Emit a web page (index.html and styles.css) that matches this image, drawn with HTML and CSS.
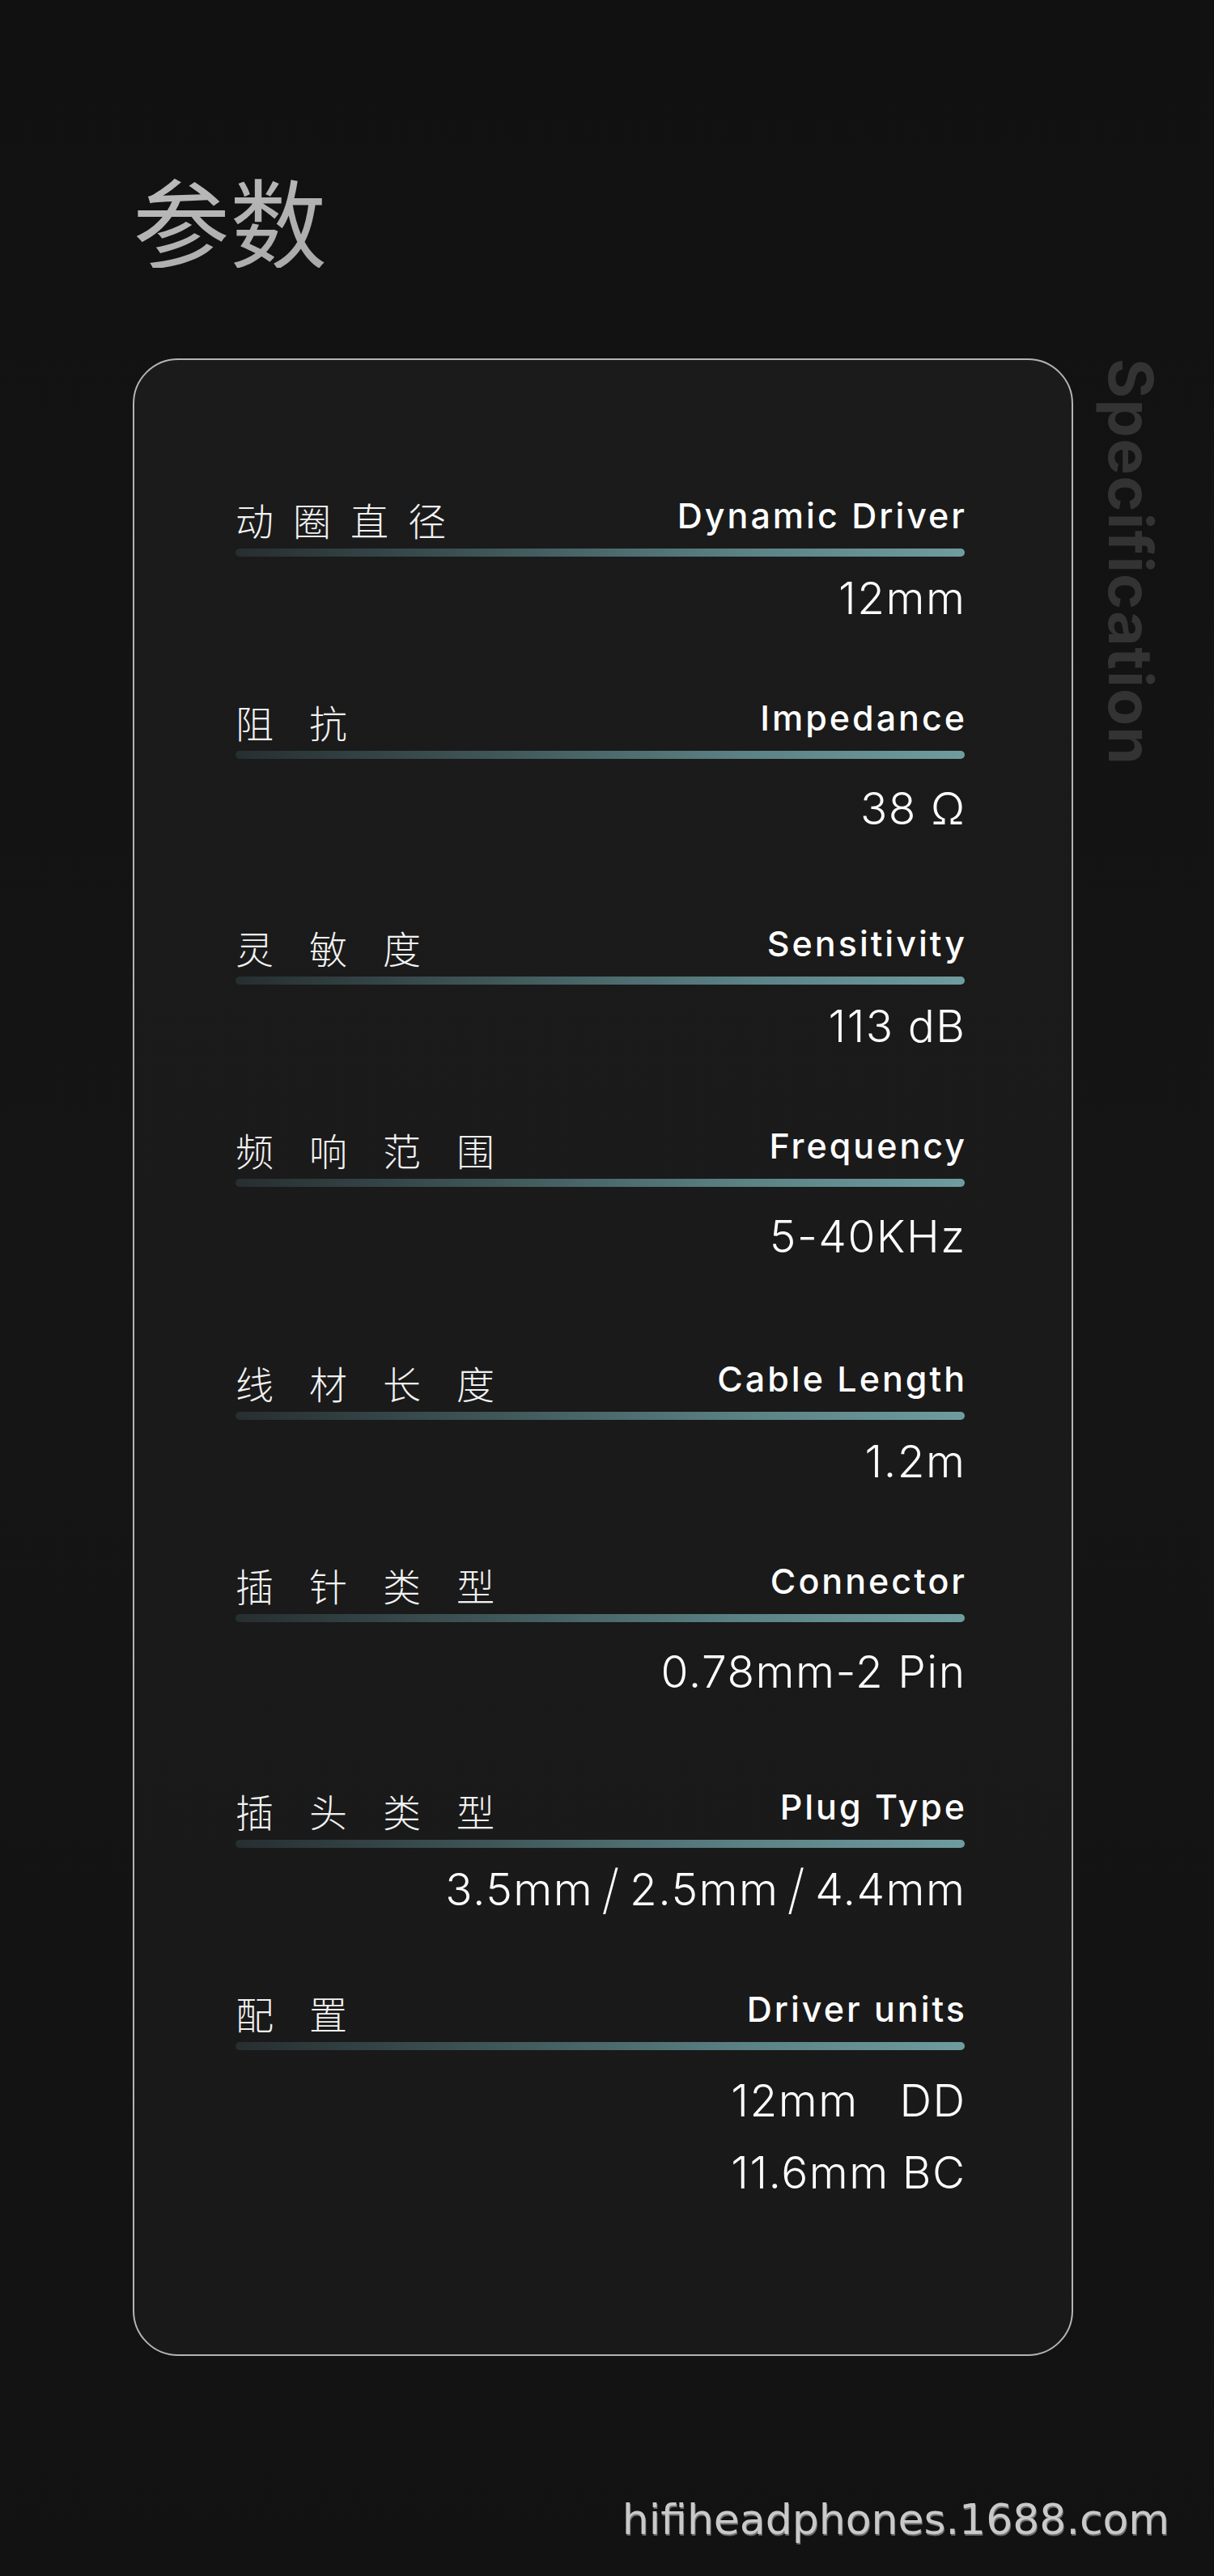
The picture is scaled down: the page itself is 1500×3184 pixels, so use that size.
FILE: index.html
```html
<!DOCTYPE html>
<html>
<head>
    <title>参数 - Specification</title>
    <link rel="stylesheet" href="styles.css">
</head>
<body>
    <div class="page">
        <h1 class="title">参数</h1>

        <div class="spec">
            <div class="card">
                <div class="row">
                    <div class="row-head">
                        <span class="cn cn--tight">动圈直径</span>
                        <span class="en">Dynamic Driver</span>
                    </div>
                    <div class="bar"></div>
                    <div class="val">12mm</div>
                </div>

                <div class="row row--low">
                    <div class="row-head">
                        <span class="cn">阻抗</span>
                        <span class="en">Impedance</span>
                    </div>
                    <div class="bar"></div>
                    <div class="val">38 Ω</div>
                </div>

                <div class="row">
                    <div class="row-head">
                        <span class="cn">灵敏度</span>
                        <span class="en">Sensitivity</span>
                    </div>
                    <div class="bar"></div>
                    <div class="val">113 dB</div>
                </div>

                <div class="row row--low">
                    <div class="row-head">
                        <span class="cn">频响范围</span>
                        <span class="en">Frequency</span>
                    </div>
                    <div class="bar"></div>
                    <div class="val">5-40KHz</div>
                </div>

                <div class="row row--far">
                    <div class="row-head">
                        <span class="cn">线材长度</span>
                        <span class="en">Cable Length</span>
                    </div>
                    <div class="bar"></div>
                    <div class="val">1.2m</div>
                </div>

                <div class="row row--low">
                    <div class="row-head">
                        <span class="cn">插针类型</span>
                        <span class="en">Connector</span>
                    </div>
                    <div class="bar"></div>
                    <div class="val">0.78mm-2 Pin</div>
                </div>

                <div class="row">
                    <div class="row-head">
                        <span class="cn">插头类型</span>
                        <span class="en">Plug Type</span>
                    </div>
                    <div class="bar"></div>
                    <div class="val">3.5mm<span class="slash">/</span>2.5mm<span class="slash">/</span>4.4mm</div>
                </div>

                <div class="row">
                    <div class="row-head">
                        <span class="cn">配置</span>
                        <span class="en">Driver units</span>
                    </div>
                    <div class="bar"></div>
                    <div class="val-stack">
                        <div class="val-line"><span>12mm</span><span>DD</span></div>
                        <div class="val-line"><span>11.6mm</span><span>BC</span></div>
                    </div>
                </div>
            </div>

            <div class="side">Specification</div>
        </div>

        <div class="footer">hifiheadphones.1688.com</div>
    </div>
</body>
</html>
```

FILE: styles.css
```css
body {
    margin: 0;
    background-color: #121212;
    color: #fff;
    font-family: Inter, "Noto Sans CJK SC", sans-serif;
}

.page {
    width: 1500px;
    height: 3184px;
    display: flex;
    flex-direction: column;
    background: linear-gradient(180deg, #111 0%, #151515 50%, #121212 100%);
}

.title {
    margin: 0;
    padding: 211px 0 0 164px;
    font: 400 120px/120px "Noto Sans CJK SC", sans-serif;
    background: linear-gradient(160deg, #d6d6d6, #a9a9a9);
    -webkit-background-clip: text;
    background-clip: text;
    color: transparent;
    align-self: flex-start;
}

.spec {
    display: flex;
    align-items: flex-start;
    margin: 112px 0 0 164px;
}

.card {
    width: 1162px;
    box-sizing: border-box;
    padding: 177px 132px 180px 125px;
    border: 2px solid #b4b4b4;
    border-radius: 56px;
    background: linear-gradient(180deg, #1b1b1b, #1a1a1a 60%, #191919);
}

/* row spacing follows the picture: pairs sit closer than groups */
.row + .row {
    margin-top: 105px;
}

.row--low + .row {
    margin-top: 124px;
}

.row--low + .row--far {
    margin-top: 133px;
}

.row-head {
    display: flex;
    justify-content: space-between;
    align-items: flex-start;
    height: 56px;
}

.cn {
    margin-top: -4px;
    font: 300 47px/47px "Noto Sans CJK SC", sans-serif;
    letter-spacing: 44px;
    color: #f2f2f2;
}

.cn--tight {
    letter-spacing: 24px;
}

.en {
    margin-top: -6px;
    margin-right: -3px;
    font-size: 43px;
    line-height: 43px;
    font-weight: 500;
    letter-spacing: 3px;
}

.bar {
    height: 10px;
    border-radius: 5px;
    background: linear-gradient(90deg, #262e30 0%, #3f5658 35%, #5b8285 70%, #6f9c9f 100%);
}

.val {
    margin-top: 24px;
    margin-right: -1.5px;
    text-align: right;
    font-size: 55px;
    line-height: 55px;
    font-weight: 300;
    letter-spacing: 1.5px;
}

.row--low .val {
    margin-top: 34px;
}

.slash {
    display: inline-block;
    margin: 0 11px 0 10px;
    font-size: 66px;
    line-height: 55px;
    font-weight: 200;
    vertical-align: -4px;
}

.val-stack {
    display: flex;
    flex-direction: column;
    width: fit-content;
    margin: 18px -1.5px 0 auto;
}

.val-line {
    display: flex;
    justify-content: space-between;
    gap: 16px;
    font-size: 55px;
    line-height: 89px;
    font-weight: 300;
    letter-spacing: 1.5px;
}

.side {
    margin-left: 34px;
    writing-mode: vertical-rl;
    font-size: 75px;
    line-height: 75px;
    font-weight: 700;
    letter-spacing: 1.4px;
    color: #333;
}

.footer {
    margin-top: auto;
    padding: 0 55px 44px 0;
    text-align: right;
    font: 52px/52px "DejaVu Sans", sans-serif;
    color: #c9c9c9;
    text-shadow: 1px 2px 0 #6f6f6f;
}
```
